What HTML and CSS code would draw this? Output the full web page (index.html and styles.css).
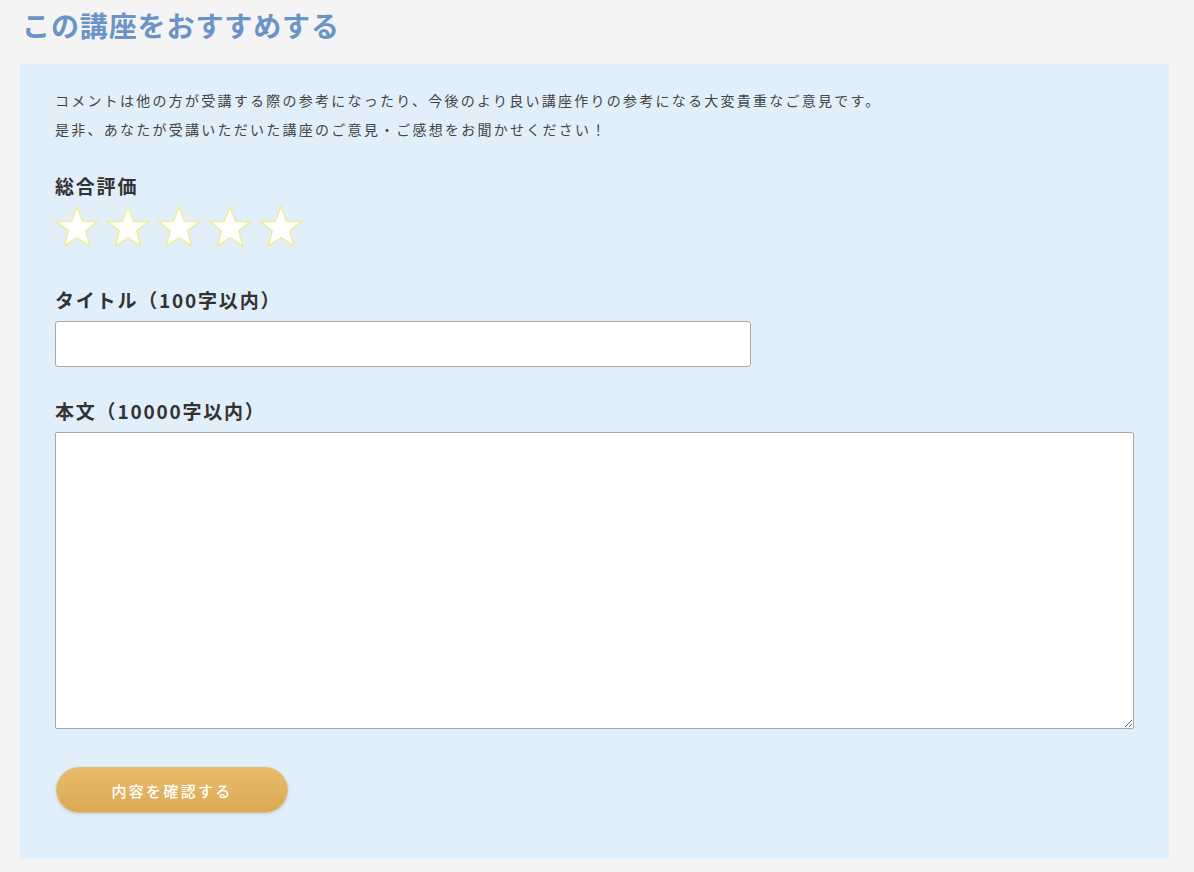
FILE: index.html
```html
<!DOCTYPE html>
<html lang="ja">
<head>
<meta charset="utf-8">
<title>この講座をおすすめする</title>
<link rel="stylesheet" href="styles.css">
</head>
<body>
<h1 class="page-title">この講座をおすすめする</h1>
<section class="panel">
  <p class="intro">コメントは他の方が受講する際の参考になったり、今後のより良い講座作りの参考になる大変貴重なご意見です。<br>是非、あなたが受講いただいた講座のご意見・ご感想をお聞かせください！</p>
  <div class="field field-rating">
    <div class="label">総合評価</div>
    <div class="stars">
      <svg class="star" viewBox="0 0 44 43"><polygon points="22,1.5 27.6,16.2 42.5,16.6 30.8,25.9 34.8,41.2 22,32.6 9.2,41.2 13.2,25.9 1.5,16.6 16.4,16.2"/></svg>
      <svg class="star" viewBox="0 0 44 43"><polygon points="22,1.5 27.6,16.2 42.5,16.6 30.8,25.9 34.8,41.2 22,32.6 9.2,41.2 13.2,25.9 1.5,16.6 16.4,16.2"/></svg>
      <svg class="star" viewBox="0 0 44 43"><polygon points="22,1.5 27.6,16.2 42.5,16.6 30.8,25.9 34.8,41.2 22,32.6 9.2,41.2 13.2,25.9 1.5,16.6 16.4,16.2"/></svg>
      <svg class="star" viewBox="0 0 44 43"><polygon points="22,1.5 27.6,16.2 42.5,16.6 30.8,25.9 34.8,41.2 22,32.6 9.2,41.2 13.2,25.9 1.5,16.6 16.4,16.2"/></svg>
      <svg class="star" viewBox="0 0 44 43"><polygon points="22,1.5 27.6,16.2 42.5,16.6 30.8,25.9 34.8,41.2 22,32.6 9.2,41.2 13.2,25.9 1.5,16.6 16.4,16.2"/></svg>
    </div>
  </div>
  <div class="field field-title">
    <label class="label" for="title">タイトル（100字以内）</label>
    <input class="text-input" id="title" type="text">
  </div>
  <div class="field field-body">
    <label class="label" for="body">本文（10000字以内）</label>
    <textarea class="text-area" id="body"></textarea>
  </div>
  <button class="submit" type="button">内容を確認する</button>
</section>
</body>
</html>
```
FILE: styles.css
```css
html, body {
  margin: 0;
  padding: 0;
}
body {
  background: #f4f4f4;
  padding: 0 25px 13px 20px;
  font-family: "Noto Sans CJK JP", "Noto Sans", sans-serif;
  color: #333;
}
.page-title {
  margin: 5px 0 19px 2px;
  font-size: 28px;
  line-height: 40px;
  font-weight: 700;
  color: #6a94c7;
  letter-spacing: 0.9px;
}
.panel {
  background: #e1effa;
  padding: 22px 35px 46px 35px;
  display: flex;
  flex-direction: column;
  align-items: flex-start;
}
.intro {
  margin: 0;
  font-size: 14px;
  line-height: 29px;
  letter-spacing: 2.25px;
  color: #444;
}
.field {
  display: flex;
  flex-direction: column;
  align-items: flex-start;
}
.field-rating { margin-top: 29px; }
.field-title { margin-top: 39px; }
.field-body { margin-top: 31px; align-self: stretch; }
.label {
  font-size: 19px;
  line-height: 26px;
  font-weight: 700;
  letter-spacing: 1.8px;
  color: #333;
}
.stars {
  display: flex;
  gap: 7px;
  margin-top: 6px;
}
.star {
  width: 44px;
  height: 43px;
  display: block;
}
.star polygon {
  fill: #ffffff;
  stroke: #eeee9c;
  stroke-width: 1.6;
  stroke-linejoin: miter;
}
.text-input {
  margin-top: 8px;
  width: 696px;
  height: 46px;
  box-sizing: border-box;
  border: 1px solid #a8a8a8;
  border-radius: 3px;
  background: #fff;
  padding: 0 10px;
  font-size: 15px;
  font-family: inherit;
}
.text-area {
  margin-top: 8px;
  width: 1079px;
  height: 297px;
  box-sizing: border-box;
  border: 1px solid #a8a8a8;
  border-radius: 2px;
  background: #fff;
  padding: 8px 10px;
  font-size: 15px;
  font-family: inherit;
  display: block;
}
.submit {
  margin-top: 38px;
  margin-left: 1px;
  width: 232px;
  height: 46px;
  border-radius: 23px;
  border: 1px solid #e2bd74;
  background: linear-gradient(#e8bc6b, #dba955);
  box-shadow: 0 1px 3px rgba(120, 150, 190, 0.35);
  color: #fff;
  font-family: inherit;
  font-size: 15px;
  font-weight: 500;
  letter-spacing: 2.3px;
  cursor: pointer;
}
```
